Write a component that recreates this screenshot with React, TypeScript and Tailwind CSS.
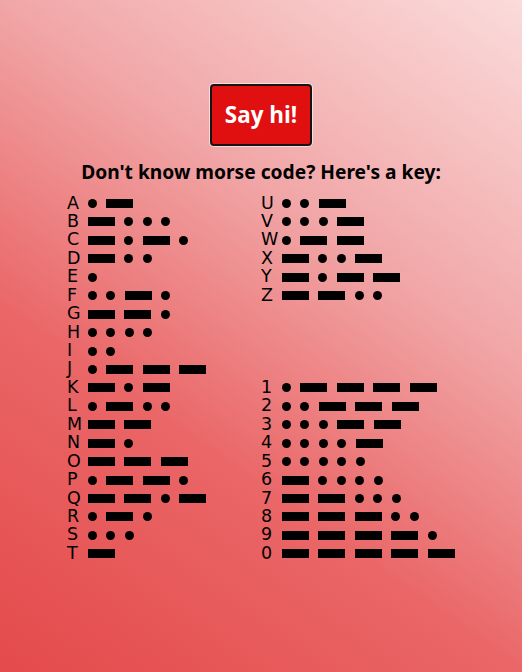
import React from 'react';

const MORSE: Record<string, string> = {
  A: '.-', B: '-...', C: '-.-.', D: '-..', E: '.', F: '..-.', G: '--.', H: '....',
  I: '..', J: '.---', K: '-.-', L: '.-..', M: '--', N: '-.', O: '---', P: '.--.',
  Q: '--.-', R: '.-.', S: '...', T: '-', U: '..-', V: '...-', W: '.--', X: '-..-',
  Y: '-.--', Z: '--..', '1': '.----', '2': '..---', '3': '...--', '4': '....-',
  '5': '.....', '6': '-....', '7': '--...', '8': '---..', '9': '----.', '0': '-----',
};

const leftKeys = 'ABCDEFGHIJKLMNOPQRST'.split('');
const rightKeys = ['U', 'V', 'W', 'X', 'Y', 'Z', '', '', '', '', '1', '2', '3', '4', '5', '6', '7', '8', '9', '0'];

const Row = ({ ch }: { ch: string }) => {
  if (!ch) return <div className="h-[18.44px]" />;
  return (
    <div className="h-[18.44px] leading-[18.44px] whitespace-nowrap">
      <span className="inline-block w-[20.5px]">{ch}</span>
      {MORSE[ch].split('').map((s, i) =>
        s === '.' ? (
          <span
            key={i}
            className={`inline-block align-middle w-[9px] h-[9px] rounded-full bg-black ${i > 0 ? 'ml-[9.5px]' : ''}`}
          />
        ) : (
          <span
            key={i}
            className={`inline-block align-middle w-[27px] h-[9px] bg-black ${i > 0 ? 'ml-[9.5px]' : ''}`}
          />
        )
      )}
    </div>
  );
};

export default function App() {
  return (
    <div className="min-h-screen w-full bg-[linear-gradient(215deg,#fbdbdb_0%,#f1a6a7_35%,#ea6667_65%,#e44a4b_100%)] pt-[84px] text-black">
      <div className="flex justify-center">
        <button className="w-[102px] h-[62px] flex items-center justify-center rounded-[4px] border-2 border-[#141414] bg-[#e01010] text-white font-bold text-[22.4px] shadow-[0_0_0_1px_rgba(255,255,255,0.55)] font-['Open_Sans',sans-serif]">
          Say hi!
        </button>
      </div>
      <h3 className="mt-[13px] text-center font-bold text-[19.2px] leading-[25.5px] font-['Noto_Sans',sans-serif]">
        Don't know morse code? Here's a key:
      </h3>
      <div className="mx-auto mt-[9px] grid w-[388px] grid-cols-2 text-[17.5px] font-['DejaVu_Sans',sans-serif]">
        <div>
          {leftKeys.map((k) => (
            <Row key={k} ch={k} />
          ))}
        </div>
        <div>
          {rightKeys.map((k, i) => (
            <Row key={i} ch={k} />
          ))}
        </div>
      </div>
    </div>
  );
}
